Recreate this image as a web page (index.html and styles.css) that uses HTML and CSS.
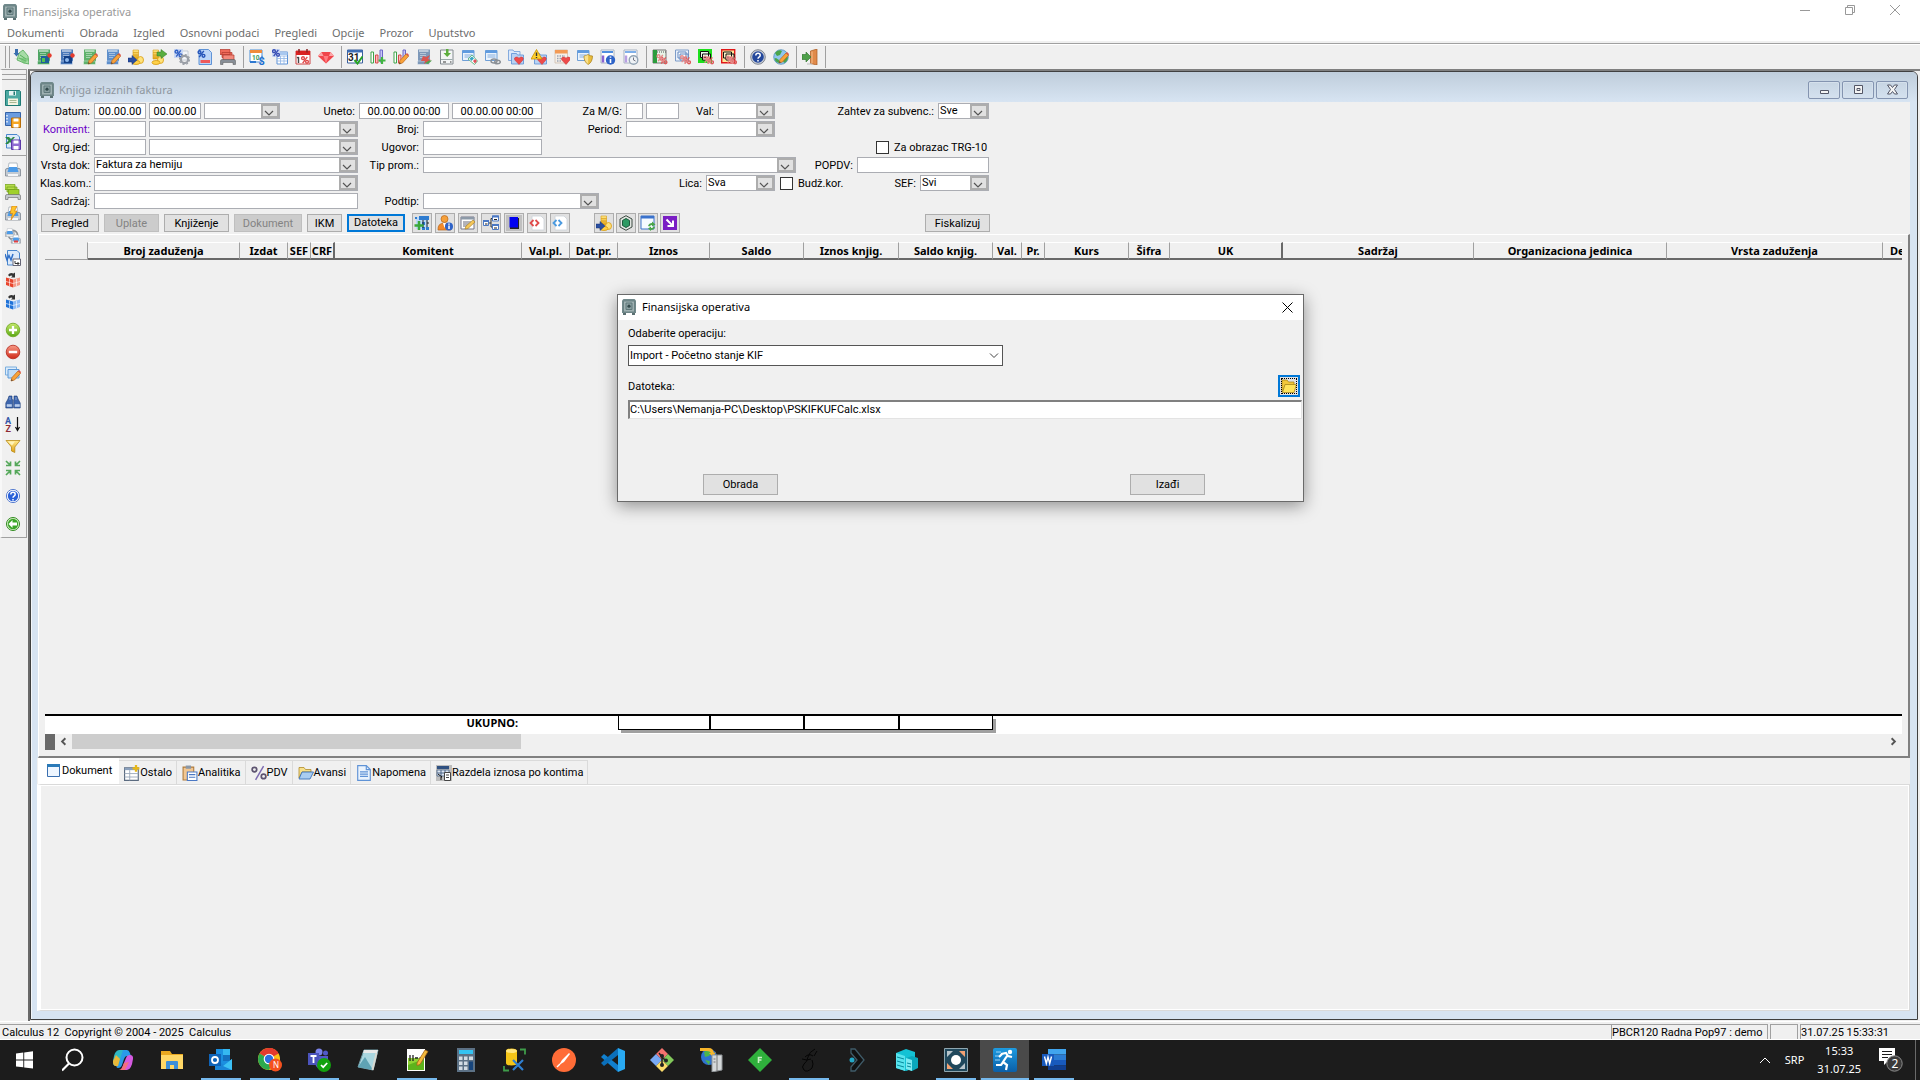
FILE: index.html
```html
<!DOCTYPE html>
<html lang="sr">
<head>
  <meta charset="UTF-8" />
  <meta name="viewport" content="width=device-width, initial-scale=1" />
  <title>Finansijska operativa</title>
  <link rel="stylesheet" href="styles.css">
</head>
<body>
  <!-- Icon sprite -->
  <svg class="sprite" xmlns="http://www.w3.org/2000/svg">
    <defs>
      <linearGradient id="g-green" x1="0" y1="0" x2="0" y2="1"><stop offset="0" stop-color="#c5e86c"/><stop offset="1" stop-color="#5aa814"/></linearGradient>
      <linearGradient id="g-red" x1="0" y1="0" x2="0" y2="1"><stop offset="0" stop-color="#f79a86"/><stop offset="1" stop-color="#cf2a1a"/></linearGradient>
      <linearGradient id="g-gold" x1="0" y1="0" x2="0" y2="1"><stop offset="0" stop-color="#ffe98a"/><stop offset="1" stop-color="#e0a010"/></linearGradient>
      <linearGradient id="g-sky" x1="0" y1="0" x2="0" y2="1"><stop offset="0" stop-color="#1d9be0"/><stop offset="1" stop-color="#0b5fa8"/></linearGradient>

      <!-- small parts -->
      <g id="pct" fill="none" stroke-width="1.4"><circle cx="2" cy="2.2" r="1.4"/><circle cx="6" cy="5.8" r="1.4"/><path d="M6.3.8 1.7 7.2"/></g>
      <g id="pencil"><path d="m6 15 1-3.5L13 5l2.500 2.300L9.500 14z" fill="#f9a23a" stroke="#b8661a" stroke-width=".7"/><path d="m13 5 1-1 2 2-.5 1.300z" fill="#e0524a"/><path d="m6 15 .6-2 1.400 1.400z" fill="#5b4a3a"/></g>
      <g id="coins"><path d="M5 1h5.500v9H5z" fill="url(#g-gold)" stroke="#d79b10" stroke-width=".6"/><path d="M5 3.500h5.500M5 6h5.500" stroke="#d79b10" stroke-width=".6"/><ellipse cx="12.500" cy="11" rx="3" ry="3.500" fill="#ffe27a" stroke="#d79b10" stroke-width=".8"/><ellipse cx="8" cy="13.500" rx="4" ry="2" fill="#ffd24a" stroke="#d79b10" stroke-width=".8"/></g>
      <g id="book"><path d="M2 .5h12v12H2z" fill="currentColor"/><path d="M3 2h9.500" stroke="#fff" stroke-width="1"/><path d="M1.500 12h12v3.500h-12z" fill="currentColor" stroke="#fff" stroke-width=".4"/><path d="M4 4.500h6M4 6.500h6M4 8.500h4" stroke="#fff" stroke-opacity=".55" stroke-width=".8"/></g>
      <g id="sheet"><path d="M.5 1.500h11.500v10H.5z" fill="#eaf3fd" stroke="#6f9fd6"/><path d="M.5 1.500h11.500v2.500H.5z" fill="#5f9be0"/><path d="M2.500 6h8M2.500 8h8" stroke="#86aede"/></g>
      <g id="printer"><path d="M4 1h8l1 6H3z" fill="#fff" stroke="#9aa3ad" stroke-width=".7"/><path d="M.5 8Q.5 6.500 2 6.500h12q1.500 0 1.500 1.500v6H.5z" fill="#c3cad2" stroke="#7d8791" stroke-width=".8"/><path d="M4 5h8l1.500 5h-11z" fill="#4c9be8"/><path d="M3 12h10v2H3z" fill="#f4f6f8"/></g>
      <g id="heart"><path d="M12 15.500 7.800 11q-1.200-2.300 1.200-3Q11 7.800 12 9.300 13 7.800 15 8q2 .800.900 3z" fill="#ee4b4b" stroke="#c93232" stroke-width=".5"/></g>

      <symbol id="i-safe" viewBox="0 0 14 16"><path d="M1.500 0h11L14 1.500V14H0V1.500z" fill="#71898b"/><path d="M1.500 2h11v11h-11z" fill="#9fb1b2" stroke="#6b8284"/><path d="M4 4h6v6.500H4z" fill="#8ba0a2" stroke="#5f787a"/><circle cx="7" cy="7.200" r="1.600" fill="#32494b"/><path d="M1 14h3v2H1zM10 14h3v2h-3z" fill="#5b7072"/></symbol>
      <symbol id="i-import" viewBox="0 0 16 16"><path d="M6 4 10 1l5 6 1 8-5-1-7-3z" fill="#a6dca6" stroke="#4fa854" stroke-width=".8"/><path d="m7 6 6 4M6 9l7 3" stroke="#55b05a"/><path d="M1 9h15v1l-5 5-4-5z" fill="#6cc070" opacity=".6"/><path d="M2 0h3v4h1.500l-3 3.500L.5 4H2z" fill="#3a6fae"/></symbol>
      <symbol id="i-book-g" viewBox="0 0 16 16"><use href="#book" color="#4ea564"/><path d="M5 7h8v7H5z" fill="#1d5f9a"/><path d="M6 9h3v4H6z" fill="#51c251"/><circle cx="13.500" cy="6.500" r="2.200" fill="#e53c2e"/></symbol>
      <symbol id="i-book-b" viewBox="0 0 16 16"><use href="#book" color="#4a78b8"/><path d="M5 7h8v7H5z" fill="#123f86"/><circle cx="8" cy="11" r="2" fill="#8fb9ec"/><circle cx="13.500" cy="6.500" r="2.200" fill="#e53c2e"/></symbol>
      <symbol id="i-edit-g" viewBox="0 0 16 16"><use href="#book" color="#5fb26c"/><use href="#pencil"/></symbol>
      <symbol id="i-edit-b" viewBox="0 0 16 16"><use href="#book" color="#5e8fcb"/><use href="#pencil"/></symbol>
      <symbol id="i-coins-in" viewBox="0 0 16 16"><use href="#coins"/><path d="M0 9h4V6.500L9 11l-5 4.500V13H0z" fill="#2a4fa0" stroke="#16327a" stroke-width=".5"/></symbol>
      <symbol id="i-coins-out" viewBox="0 0 16 16"><use href="#coins" x="-3"/><path d="M6 3h4V.5L16 5l-6 4.500V7H6z" fill="#58ad3f" stroke="#327a22" stroke-width=".5"/></symbol>
      <symbol id="i-pct-gear" viewBox="0 0 16 16"><path d="M6 2h8v9H6z" fill="#f4f6f9" stroke="#b3bcc8" stroke-width=".7"/><path d="M0 0h9v9H0z" fill="#c9d8f4"/><use href="#pct" x="0.500" y="0.500" stroke="#2f5fc4"/><circle cx="10.500" cy="10.500" r="3.600" fill="none" stroke="#9a9fa6" stroke-width="2.200"/><circle cx="10.500" cy="10.500" r="5" fill="none" stroke="#9a9fa6" stroke-width="1.200" stroke-dasharray="2 1.900"/></symbol>
      <symbol id="i-pct-doc" viewBox="0 0 16 16"><path d="M2 .5h9.500l3 3v12H2z" fill="#bcd6f8" stroke="#5f93d6"/><path d="M3.500 11h9.500v3H3.500z" fill="#ee5a5a"/><use href="#pct" x="0.500" y="1" stroke="#2352b8"/></symbol>
      <symbol id="i-print-red" viewBox="0 0 16 16"><path d="M0 .5h10v5H0zM2 3.500h10v5H2z" fill="#ef6a5a" stroke="#b23a2e" stroke-width=".7"/><path d="M3 6h11v5H3z" fill="#f2897c" stroke="#b23a2e" stroke-width=".7"/><path d="M.5 15.500v-3.500q0-1.500 1.500-1.500h12q1.500 0 1.500 1.500v3.500h-2.500v-2h-10v2z" fill="#888f97" stroke="#555" stroke-width=".5"/></symbol>
      <symbol id="i-cal-money" viewBox="0 0 16 16"><path d="M1 1h12v12H1z" fill="#fff" stroke="#4a90d8"/><path d="M1 1h12v3H1z" fill="#f08b3c"/><text x="3" y="10.500" font-size="6.500" font-weight="bold" fill="#3a9a5a">10</text><path d="M1 13h6" stroke="#2f78d0" stroke-width="2"/><text x="9.500" y="15.500" font-size="11" font-weight="bold" fill="#1f6fd0">$</text></symbol>
      <symbol id="i-pct-table" viewBox="0 0 16 16"><path d="M5 3h10.500v12H5z" fill="#fff" stroke="#5f93d6"/><path d="M5 7h10M5 9.500h10M5 12h10M8.500 7v8M12 7v8" stroke="#8fb5e6" stroke-width=".8"/><path d="M5 3h10.500v3H5z" fill="#a9c8ef"/><path d="M0 0h8v8H0z" fill="#c9d8f4"/><use href="#pct" x="0" y="0" stroke="#3a4fb4"/></symbol>
      <symbol id="i-cal-pct" viewBox="0 0 16 16"><path d="M1 2h14v13H1z" fill="#fff" stroke="#c44"/><path d="M1 2h14v4H1z" fill="#d92020"/><path d="M4 0v3.500M12 0v3.500" stroke="#822" stroke-width="1.500"/><path d="M3.500 8v6M2 9l1.500-1" stroke="#444" stroke-width="1.400"/><use href="#pct" x="6" y="7" stroke="#e04848"/></symbol>
      <symbol id="i-gem" viewBox="0 0 16 16"><path d="M3.500 3h9L16 7l-8 7.500L0 7z" fill="#f0454a"/><path d="M0 7 3.500 3l2 4zM12.500 3 16 7h-5z" fill="#fba6a8"/><path d="M5.500 7h5L8 14.500z" fill="#ff7b80"/></symbol>
      <symbol id="i-cal31" viewBox="0 0 16 16"><path d="M.5 1h15v13H.5z" fill="#fff" stroke="#3a5f9c"/><path d="M.5 1h15v2.500H.5z" fill="#3d6db4"/><text x="1" y="12" font-size="10" font-weight="bold" fill="#222">31</text><path d="m7.500 11 3 3.500 5-7" fill="none" stroke="#27a327" stroke-width="2"/></symbol>
      <symbol id="i-chart-add" viewBox="0 0 16 16"><path d="M1 3h2.500v11H1z" fill="#fff" stroke="#3fa349"/><path d="M5.500 6H8v8H5.500z" fill="#fbb" stroke="#d34a4a"/><path d="M10 1h2.500v12H10z" fill="#c8c6f5" stroke="#6b67c8"/><path d="M12 8v7M8.500 11.500h7" stroke="#41b541" stroke-width="2.200"/></symbol>
      <symbol id="i-chart-edit" viewBox="0 0 16 16"><path d="M1 3h2.500v11H1z" fill="#fff" stroke="#3fa349"/><path d="M5.500 6H8v8H5.500z" fill="#fbb" stroke="#d34a4a"/><path d="M10 1h2.500v8H10z" fill="#c8c6f5" stroke="#6b67c8"/><use href="#pencil"/></symbol>
      <symbol id="i-book-bolt" viewBox="0 0 16 16"><use href="#book" color="#7d98b8"/><path d="m7 7 3 1 4-2-2 4 3 1-7 4 1-3-4 0z" fill="#d95450"/><path d="m9 14 4-2.500h3L12 15z" fill="#4fa34f"/></symbol>
      <symbol id="i-disk-down" viewBox="0 0 16 16"><path d="M1.500 1h12.500v14H1.500z" fill="#f3f5f6" stroke="#838a90"/><path d="M2 10.500h11.500" stroke="#9aa"/><path d="M7 0h2.500v4H12L8.200 8 4.500 4H7z" fill="#5cad3e"/><path d="M4 13h3M11 13h1.500" stroke="#777" stroke-width="1.300"/></symbol>
      <symbol id="i-sheet-tag" viewBox="0 0 16 16"><use href="#sheet"/><path d="m6 10 4-4 5.500 6-3 3.500z" fill="#fff" stroke="#6b8"/><path d="m7.500 9.500 2.500-2 2 2-2.500 2.500z" fill="#3aa6c4"/><path d="m11 12 2-2 2 2-2 2.500z" fill="#e0505a"/></symbol>
      <symbol id="i-sheet-link" viewBox="0 0 16 16"><use href="#sheet"/><ellipse cx="9" cy="12" rx="3" ry="2" fill="none" stroke="#8b9096" stroke-width="1.500"/><ellipse cx="12.500" cy="13" rx="2.800" ry="1.800" fill="none" stroke="#8b9096" stroke-width="1.500"/></symbol>
      <symbol id="i-folders" viewBox="0 0 16 16"><path d="M.5 1H5l1 1.500h6v9H.5z" fill="#dce9fa" stroke="#6c9ad8" stroke-width=".8"/><path d="M3.500 4.500h5l1 1.500h6V15h-12z" fill="#b8d2f4" stroke="#5b8fd4" stroke-width=".8"/><use href="#heart" x="-1"/></symbol>
      <symbol id="i-folder-warn" viewBox="0 0 16 16"><path d="M3.500 4.500h5l1 1.500h6V15h-12z" fill="#b8d2f4" stroke="#5b8fd4" stroke-width=".8"/><use href="#heart" x="-1"/><path d="m5.500.5 5.500 9.500H0z" fill="#ffd02a" stroke="#c98f00" stroke-width=".8"/><path d="M5.500 3.500v3.500M5.500 8v1" stroke="#333" stroke-width="1.400"/></symbol>
      <symbol id="i-calc-heart" viewBox="0 0 16 16"><path d="M1 1h12.500v13H1z" fill="#f5efe9" stroke="#c8b8a8" stroke-width=".7"/><path d="M1 1h12.500v3.500H1z" fill="#f39a55"/><path d="M3 7h8M3 9.500h6M3 12h5" stroke="#9aa5b5" stroke-width="1.400" stroke-dasharray="1.500 1"/><use href="#heart"/></symbol>
      <symbol id="i-sheet-shield" viewBox="0 0 16 16"><use href="#sheet"/><path d="M7 7q2.500 0 4-1.500Q13 7 15.500 7q0 6-4.300 8.500Q7 13 7 7z" fill="#e9bd3e" stroke="#a87d14" stroke-width=".7"/><path d="M11.200 6v9Q7.500 12.500 7.500 7.300z" fill="#f8e08c"/></symbol>
      <symbol id="i-info" viewBox="0 0 16 16"><path d="M1 1h13v13H1z" fill="#fff" stroke="#a8b2c0"/><path d="M2 3h11" stroke="#4f8fe0" stroke-width="2"/><path d="M3 6.500v7" stroke="#8a63d2" stroke-width="2.500"/><circle cx="10.500" cy="11" r="4.700" fill="#2e63c8"/><path d="M10.500 10v4M10.500 7.500v1.300" stroke="#fff" stroke-width="1.600"/></symbol>
      <symbol id="i-clock" viewBox="0 0 16 16"><path d="M1 1h13v13H1z" fill="#fff" stroke="#a8b2c0"/><path d="M2 3h11" stroke="#7fb0ea" stroke-width="2"/><path d="M3 6.500v7" stroke="#b8a0e2" stroke-width="2.500"/><circle cx="10.500" cy="11" r="4.300" fill="#eef2f5" stroke="#93a4b4" stroke-width="1.400"/><path d="M10.500 8.500V11l2 1" fill="none" stroke="#667" stroke-width=".9"/></symbol>
      <symbol id="i-rep1" viewBox="0 0 16 16"><path d="M1 1h13v13H1z" fill="#e8f5e8" stroke="#777"/><path d="M1 1h4v13H1z" fill="#2c9c3c"/><path d="M5 3h9" stroke="#555" stroke-dasharray="1 1"/><use href="#pct" x="7.500" y="7.500" stroke="#dd5a5a"/><use href="#pct" x="4.500" y="5" stroke="#e58a8a"/></symbol>
      <symbol id="i-rep2" viewBox="0 0 16 16"><path d="M.5 1h13v11H.5z" fill="#e9f0fa" stroke="#7d9cc8"/><path d="M3 3h8v6H3zM5 5h8v6H5z" fill="#fff" stroke="#5f86c0"/><use href="#pct" x="8" y="7.500" stroke="#dd5a5a"/><use href="#pct" x="5" y="6" stroke="#e58a8a"/></symbol>
      <symbol id="i-rep3" viewBox="0 0 16 16"><path d="M0 0h14v14H0z" fill="#1ee01e"/><path d="M2.500 2.500h8v6h-8zM4.500 5h8v6h-8z" fill="#eafbea" stroke="#111"/><use href="#pct" x="8" y="7.500" stroke="#dd5a5a"/><use href="#pct" x="5" y="6.500" stroke="#e58a8a"/></symbol>
      <symbol id="i-rep4" viewBox="0 0 16 16"><path d="M.700.700h13v13h-13z" fill="#ffe79a" stroke="#e01818" stroke-width="1.400"/><path d="M2.500 3h8v6h-8zM5 5h8v6H5z" fill="#fff3c4" stroke="#111"/><use href="#pct" x="8" y="7.500" stroke="#dd5a5a"/><use href="#pct" x="5" y="6.500" stroke="#e58a8a"/></symbol>
      <symbol id="i-help" viewBox="0 0 16 16"><circle cx="8" cy="8" r="7.300" fill="#c9ced6" stroke="#68707c" stroke-width=".8"/><circle cx="8" cy="8" r="5.800" fill="#24489c"/><path d="M5.800 6.500Q5.800 4.300 8 4.300t2.200 2q0 1.200-1.200 1.900-1 .6-1 1.500M8 10.900v1.500" fill="none" stroke="#fff" stroke-width="1.500"/></symbol>
      <symbol id="i-globe-edit" viewBox="0 0 16 16"><circle cx="8" cy="8" r="7.300" fill="#8fc6ee" stroke="#4787b5" stroke-width=".7"/><path d="M2 4q3-4 7-2l-2 4-3 1zM9 10l5-3 1 2q-1 4-4 5zM3 9l3 2v3Q2 13 1.500 9.500z" fill="#4aa54a"/><use href="#pencil" y="-1"/></symbol>
      <symbol id="i-exit" viewBox="0 0 16 16"><path d="M8.500 2 15 0v16l-6.500-1.500z" fill="#e08a4a" stroke="#a85a20" stroke-width=".7"/><path d="M10 2.500v12" stroke="#f7bd8a"/><path d="M0 5.500h4V3l5 5-5 5v-2.500H0z" fill="#4fa04a" stroke="#2c6e2a" stroke-width=".6"/><path d="M5 15h5" stroke="#bbb"/></symbol>

      <symbol id="i-save" viewBox="0 0 16 16"><path d="M.5.500h14l1 1v14H.5z" fill="#4ca9a2" stroke="#1f7a74"/><path d="M4 1h7v4.500H4z" fill="#e8f4f3"/><path d="M8.500 1.500h1.500V5H8.500z" fill="#1f7a74"/><path d="M3 8.500h10V15H3z" fill="#f4f4e2"/><path d="M4.500 10.500h7M4.500 12.500h7" stroke="#a8b894"/></symbol>
      <symbol id="i-save-o" viewBox="0 0 16 16"><path d="M.5.500h15v13H.5z" fill="#6b9ce0" stroke="#3563a8"/><path d="M2 3v9" stroke="#fff" stroke-dasharray="1.500 1.500" stroke-width="1.300"/><path d="M6.500 6h9v9.500h-9z" fill="#f5a623" stroke="#b86e08"/><path d="M8.500 6.500h5v3h-5zM8.500 12h5v3.500h-5z" fill="#fff"/></symbol>
      <symbol id="i-save-x" viewBox="0 0 16 16"><path d="M1.500.500H12L14.500 3v11h-13z" fill="#dceafa" stroke="#4a86cc"/><path d="m0 3 4 0 2 2L8 3h2L7 6.500l3 3.500H7L5 8 3 10H0l3.500-3.500z" fill="#2d8a45"/><path d="M6.500 6h9v9.500h-9z" fill="#8f6cd2" stroke="#5d3aa8"/><path d="M8.500 6.500h5v3h-5zM8.500 12h5v3.500h-5z" fill="#fff"/></symbol>
      <symbol id="i-print" viewBox="0 0 16 16"><use href="#printer"/></symbol>
      <symbol id="i-print-g" viewBox="0 0 16 16"><path d="M0 .5h10v5H0zM2 3h10v5H2z" fill="#b4dc4a" stroke="#6f9c16" stroke-width=".7"/><path d="M3.500 5.500H14V11H3.500z" fill="#a0d02c" stroke="#6f9c16" stroke-width=".7"/><path d="M.5 15.500v-3.500q0-1.500 1.500-1.500h12q1.500 0 1.500 1.500v3.500h-2.500v-2h-10v2z" fill="#c4c9ce" stroke="#666" stroke-width=".6"/></symbol>
      <symbol id="i-print-bolt" viewBox="0 0 16 16"><use href="#printer"/><path d="m7 0 5 0-2.500 5H12l-6 9 1.500-6.500H5z" fill="#ffc42a" stroke="#d67f10" stroke-width=".7"/></symbol>
      <symbol id="i-print-chain" viewBox="0 0 16 16"><circle cx="8" cy="7" r="4.500" fill="none" stroke="#8b9096" stroke-width="1.800"/><g transform="scale(.6)"><use href="#printer"/></g><g transform="translate(6 6.500) scale(.62)"><use href="#printer"/></g><path d="M9 12.500h4v2H9z" fill="#e04040"/></symbol>
      <symbol id="i-word" viewBox="0 0 16 16"><path d="M2.500.500H12L14.500 3v12h-12z" fill="#dceafa" stroke="#4a86cc"/><path d="m0 4 2 6 2-4.500L6 10l2-6" fill="none" stroke="#2f6fc8" stroke-width="1.500"/><path d="M8 9h7.500v6.500H8z" fill="#fff" stroke="#667"/><path d="M10 11v2.500h4m-1.500-1.500 1.500 1.500-1.500 1.500" fill="none" stroke="#333"/></symbol>
      <symbol id="i-box-r" viewBox="0 0 16 16"><path d="M1 5.500 8 7.500v8L1 13z" fill="#e8442c"/><path d="M15 5.500 8 7.500v8l7-2.500z" fill="#f49a88"/><path d="M1 9.500l7 2 7-2M4.500 7v7M11.500 7v7" stroke="#fff" stroke-width=".6" fill="none"/><path d="M3 3q2-3 5.500-1.500L10 .500v5H6l1.500-1.500Q6 3 4.500 4.500z" fill="#333"/></symbol>
      <symbol id="i-box-b" viewBox="0 0 16 16"><path d="M1 5.500 8 7.500v8L1 13z" fill="#1f72d8"/><path d="M15 5.500 8 7.500v8l7-2.500z" fill="#8fbcf4"/><path d="M1 9.500l7 2 7-2M4.500 7v7M11.500 7v7" stroke="#fff" stroke-width=".6" fill="none"/><path d="M3 3q2-3 5.500-1.500L10 .500v5H6l1.500-1.500Q6 3 4.500 4.500z" fill="#333"/></symbol>
      <symbol id="i-add" viewBox="0 0 16 16"><circle cx="8" cy="8" r="6.800" fill="url(#g-green)" stroke="#6ba51c" stroke-width=".8"/><path d="M8 4v8M4 8h8" stroke="#fff" stroke-width="2.300"/></symbol>
      <symbol id="i-remove" viewBox="0 0 16 16"><circle cx="8" cy="8" r="6.800" fill="url(#g-red)" stroke="#b3261a" stroke-width=".8"/><path d="M3.800 8h8.400" stroke="#fff" stroke-width="2.500"/></symbol>
      <symbol id="i-modify" viewBox="0 0 16 16"><path d="M.5 1h11v8H.5z" fill="#dcecfb" stroke="#7aaede"/><path d="M3 3.500h11V12H3z" fill="#c3ddf7" stroke="#5d9ad8"/><use href="#pencil"/></symbol>
      <symbol id="i-find" viewBox="0 0 16 16"><path d="M4 2h3v3l.8 1V14H.8V9L3 5zM12 2H9v3l-.3 1V14h6.500V9L13 5z" fill="#3d66ae" stroke="#1d3d78" stroke-width=".6"/><path d="M2 10.500h4.500v2H2zM10 10.500h4.500v2H10zM5 3v3M11 3v3" fill="#b9cdec" stroke="#b9cdec" stroke-width=".6"/></symbol>
      <symbol id="i-sort" viewBox="0 0 16 16"><text x="0" y="7.500" font-size="9" font-weight="bold" fill="#3257a8">A</text><text x="0.500" y="15.500" font-size="9" font-weight="bold" fill="#8c2a35">Z</text><path d="M12.500 1v13M10.500 11l2 3.500 2-3.500" fill="none" stroke="#111" stroke-width="1.200"/></symbol>
      <symbol id="i-filter" viewBox="0 0 16 16"><path d="M1 2.500h14L9.800 9v5.500L6.500 13V9z" fill="url(#g-gold)" stroke="#b98a18" stroke-width=".8"/><path d="M3 3.500h7l-3 4z" fill="#fff3b8"/></symbol>
      <symbol id="i-collapse" viewBox="0 0 16 16"><path d="M1 1l4 4M5.500 1.500V5.500H1M15 1l-4 4M10.500 1.500V5.500h4.500M1 15l4-4M5.500 14.500v-4H1M15 15l-4-4M10.500 14.500v-4h4.500" fill="none" stroke="#55a85a" stroke-width="1.700"/></symbol>
      <symbol id="i-help2" viewBox="0 0 16 16"><circle cx="8" cy="8" r="6.600" fill="#fff" stroke="#5a7fd0" stroke-width="1"/><circle cx="8" cy="8" r="5.200" fill="#2a61d8"/><path d="M5.800 6.500Q5.800 4.300 8 4.300t2.200 2q0 1.200-1.200 1.900-1 .6-1 1.500M8 10.900v1.500" fill="none" stroke="#fff" stroke-width="1.500"/></symbol>
      <symbol id="i-back" viewBox="0 0 16 16"><circle cx="8" cy="8" r="6.500" fill="#dff3d2" stroke="#2e8a1c" stroke-width="1"/><circle cx="8" cy="8" r="5.200" fill="#3aa526"/><path d="m3.500 8 4-4v2.500H12v3H7.500V12z" fill="#fff"/></symbol>

      <symbol id="i-map-add" viewBox="0 0 16 16"><path d="M2 2h12v12H2z" fill="#b9d8f8"/><path d="M5 1h10v4H5zM8 7h3v3H8zM8 12h3v3H8zM12 12h3v3h-3z" fill="#2f7cd0"/><path d="M13 5v7M9 5v8M13 8h2" stroke="#222"/><path d="M5 6v9M.5 10.500h9" stroke="#3aa83a" stroke-width="2.500"/><path d="M1 2h2v2H1z" fill="#2f7cd0"/></symbol>
      <symbol id="i-user" viewBox="0 0 16 16"><circle cx="7.500" cy="4" r="3.500" fill="#f5a03a" stroke="#b8661a" stroke-width=".7"/><path d="M1 15q-.5-7 6.500-7t6.500 7z" fill="#f28a2a" stroke="#b8661a" stroke-width=".7"/><path d="M6 8h3l-1.500 5z" fill="#fff"/><circle cx="12" cy="11.500" r="4" fill="#2e63c8"/><path d="M12 10.500v3.500M12 8.500v1.200" stroke="#fff" stroke-width="1.500"/></symbol>
      <symbol id="i-note" viewBox="0 0 16 16"><path d="M1 2h13v12H1z" fill="#fff" stroke="#778"/><path d="M1 2h13v2.500H1z" fill="#8d9aa8"/><path d="M3 7h8M3 9h8M3 11h5" stroke="#556" stroke-width=".9"/><path d="m5 14 1-3 7-6 2 2-7 6.500z" fill="#f4c65a" stroke="#a57a1c" stroke-width=".6"/></symbol>
      <symbol id="i-tree" viewBox="0 0 16 16"><path d="M.5 5.500h5v5h-5zM9.500 1h6v5h-6zM9.500 9.500h6v5h-6z" fill="#fff" stroke="#4a78c4"/><path d="M0 5h6v2H0zM9 .5h7v2H9zM9 9h7v2H9z" fill="#4a78c4"/><path d="M2 9h2.500M11 4.500h3M11 13h3" stroke="#222"/><path d="M6 8h2V3.500h1M8 8v4h1" stroke="#333" fill="none"/></symbol>
      <symbol id="i-square" viewBox="0 0 16 16"><path d="M0 0h16v16H0z" fill="#c0c0c0"/><path d="M4 3h9v11H4z" fill="#222"/><path d="M3.500 2h8.500v10.500H3.500z" fill="#0000f0"/></symbol>
      <symbol id="i-code-r" viewBox="0 0 16 16"><path d="M3 1h9l3 3v11H3z" fill="#fff" stroke="#ccd2d8" stroke-width=".8"/><path d="M4.500 5 1.500 8l3 3M6.500 5l3 3-3 3" fill="none" stroke="#e04a4a" stroke-width="1.800"/></symbol>
      <symbol id="i-code-b" viewBox="0 0 16 16"><path d="M3 1h9l3 3v11H3z" fill="#fff" stroke="#ccd2d8" stroke-width=".8"/><path d="M4.500 5 1.500 8l3 3M6.500 5l3 3-3 3" fill="none" stroke="#4a9ae0" stroke-width="1.800"/></symbol>
      <symbol id="i-hex" viewBox="0 0 16 16"><path d="M8 .700 14 4v8l-6 3.300L2 12V4z" fill="#dfe4df" stroke="#3d4a42"/><path d="m8 3.500 3.500 2v5L8 12.500l-3.500-2v-5z" fill="#2c9a62" stroke="#1d5a3c"/></symbol>
      <symbol id="i-win-refresh" viewBox="0 0 16 16"><path d="M1 1h13v13H1z" fill="#f5faff" stroke="#3a72cc"/><path d="M1 1h13v2.500H1z" fill="#3a72cc"/><path d="M8 11q1-3 4-3l0-1.500 3.500 3-3.500 2V10q-2 0-2.500 1.500zM15 12q-1 3-4 3l0 1-3-2.500 3-2V13q2 0 2.500-1.500z" fill="#4aa54a"/></symbol>
      <symbol id="i-purple" viewBox="0 0 16 16"><path d="M1 1h14v14H1z" fill="#7a1fc4"/><path d="m4.500 4.500 6 6M11 5.500V11H5.500" fill="none" stroke="#fff" stroke-width="2"/></symbol>
      <symbol id="i-folder" viewBox="0 0 16 16"><path d="M1 2h5l1.500 2H13v3H4.500L1 14z" fill="#f2c73a" stroke="#a8871a" stroke-width=".8"/><path d="M4 6.500h11.500L13 14.500H1.500z" fill="#ffe35a" stroke="#a8871a" stroke-width=".8"/></symbol>

      <symbol id="i-tab-win" viewBox="0 0 13 13"><path d="M.5.500h12v12H.5z" fill="#eef6ff" stroke="#3a6fb0"/><path d="M0 0h13v3H0z" fill="#2a7ab8"/></symbol>
      <symbol id="i-tab-new" viewBox="0 0 14 14"><path d="M.5 2.500h12v11H.5z" fill="#fff" stroke="#5b6b80"/><path d="M.5 2.500h12v2H.5z" fill="#8aa0bc"/><path d="M.5 7.500h12M.5 10.500h12M5 4.500v9" stroke="#9aa8ba" stroke-width=".8"/><path d="M10.500 0v6M7.500 3h6" stroke="#e8b818" stroke-width="2"/></symbol>
      <symbol id="i-tab-clip" viewBox="0 0 14 15"><path d="M.5 2h10v12H.5z" fill="#f2c792" stroke="#b07a3a"/><path d="M3 .500h5v3H3z" fill="#8a98a8"/><path d="M4.500 6.500h9v8h-9z" fill="#fff" stroke="#4a78c4"/><path d="M6 9h6M6 11.500h6" stroke="#4a78c4"/></symbol>
      <symbol id="i-tab-pct" viewBox="0 0 14 14"><circle cx="3" cy="4" r="2" fill="none" stroke="#5d5470" stroke-width="1.500"/><circle cx="11" cy="10" r="2" fill="none" stroke="#5d5470" stroke-width="1.500"/><path d="m11 1-7 12" stroke="#7d6bb0" stroke-width="1.300"/></symbol>
      <symbol id="i-tab-folder" viewBox="0 0 16 14"><path d="M1 1.500h5l1.500 2H13V6H4L1 12z" fill="#f7e08a" stroke="#b08a2a" stroke-width=".8"/><path d="M4 6h11.500L12 13H1z" fill="#a9cdf2" stroke="#3a72b8" stroke-width=".9"/></symbol>
      <symbol id="i-tab-doc" viewBox="0 0 12 14"><path d="M.5.500H8L11.500 4v9.500H.5z" fill="#eaf3fd" stroke="#5f93d6"/><path d="M8 .500V4h3.500M2.500 6h7M2.500 8h7M2.500 10h7" fill="none" stroke="#5f93d6"/></symbol>
      <symbol id="i-tab-split" viewBox="0 0 16 16"><path d="M0 0h16v16H0z" fill="#bdbdbd"/><path d="M1 1h12v3H1z" fill="#2f5080"/><path d="M1 5h12v6H1z" fill="#dde6f2" stroke="#4c6486" stroke-width=".8"/><path d="M5 5v6M9 5v6M1 8h12" stroke="#4c6486"/><path d="M8.500 7.500h6v8h-6z" fill="#fff" stroke="#444"/><path d="M10 10h3M10 12.500h3" stroke="#444"/><path d="m2 9 4 3-1 0v3" stroke="#111" fill="none"/></symbol>
    </defs>
  </svg>

  <!-- Main title bar and menu -->
  <header class="titlebar">
    <svg class="app-icon"><use href="#i-safe"/></svg>
    <h1>Finansijska operativa</h1>
    <div class="win-controls">
      <button aria-label="Minimize"><svg viewBox="0 0 10 10"><path d="M0 5.500h10"/></svg></button>
      <button aria-label="Restore"><svg viewBox="0 0 10 10"><path d="M.5 2.500h7v7h-7zM2.500 2.500v-2h7v7h-2"/></svg></button>
      <button aria-label="Close"><svg viewBox="0 0 10 10"><path d="m0 0 10 10M10 0 0 10"/></svg></button>
    </div>
  </header>
  <nav class="menu">
    <button>Dokumenti</button>
    <button>Obrada</button>
    <button>Izgled</button>
    <button>Osnovni podaci</button>
    <button>Pregledi</button>
    <button>Opcije</button>
    <button>Prozor</button>
    <button>Uputstvo</button>
  </nav>

  <div class="toolbar">
    <span class="grip"></span>
    <button><svg><use href="#i-import"/></svg></button>
    <button><svg><use href="#i-book-g"/></svg></button>
    <button><svg><use href="#i-book-b"/></svg></button>
    <button><svg><use href="#i-edit-g"/></svg></button>
    <button><svg><use href="#i-edit-b"/></svg></button>
    <button><svg><use href="#i-coins-in"/></svg></button>
    <button><svg><use href="#i-coins-out"/></svg></button>
    <button><svg><use href="#i-pct-gear"/></svg></button>
    <button><svg><use href="#i-pct-doc"/></svg></button>
    <button><svg><use href="#i-print-red"/></svg></button>
    <span class="sep"></span>
    <button><svg><use href="#i-cal-money"/></svg></button>
    <button><svg><use href="#i-pct-table"/></svg></button>
    <button><svg><use href="#i-cal-pct"/></svg></button>
    <button><svg><use href="#i-gem"/></svg></button>
    <span class="sep"></span>
    <button><svg><use href="#i-cal31"/></svg></button>
    <button><svg><use href="#i-chart-add"/></svg></button>
    <button><svg><use href="#i-chart-edit"/></svg></button>
    <button><svg><use href="#i-book-bolt"/></svg></button>
    <button><svg><use href="#i-disk-down"/></svg></button>
    <button><svg><use href="#i-sheet-tag"/></svg></button>
    <button><svg><use href="#i-sheet-link"/></svg></button>
    <button><svg><use href="#i-folders"/></svg></button>
    <button><svg><use href="#i-folder-warn"/></svg></button>
    <button><svg><use href="#i-calc-heart"/></svg></button>
    <button><svg><use href="#i-sheet-shield"/></svg></button>
    <button><svg><use href="#i-info"/></svg></button>
    <button><svg><use href="#i-clock"/></svg></button>
    <span class="sep"></span>
    <button><svg><use href="#i-rep1"/></svg></button>
    <button><svg><use href="#i-rep2"/></svg></button>
    <button><svg><use href="#i-rep3"/></svg></button>
    <button><svg><use href="#i-rep4"/></svg></button>
    <span class="sep"></span>
    <button><svg><use href="#i-help"/></svg></button>
    <button><svg><use href="#i-globe-edit"/></svg></button>
    <span class="sep"></span>
    <button><svg><use href="#i-exit"/></svg></button>
    <span class="sep"></span>
  </div>

  <div class="workspace">
    <aside class="sidebar">
      <span class="grip"></span>
      <button><svg><use href="#i-save"/></svg></button>
      <button><svg><use href="#i-save-o"/></svg></button>
      <button><svg><use href="#i-save-x"/></svg></button>
      <span class="sep"></span>
      <button><svg><use href="#i-print"/></svg></button>
      <button><svg><use href="#i-print-g"/></svg></button>
      <button><svg><use href="#i-print-bolt"/></svg></button>
      <button><svg><use href="#i-print-chain"/></svg></button>
      <button><svg><use href="#i-word"/></svg></button>
      <button><svg><use href="#i-box-r"/></svg></button>
      <button><svg><use href="#i-box-b"/></svg></button>
      <span class="space"></span>
      <button><svg><use href="#i-add"/></svg></button>
      <button><svg><use href="#i-remove"/></svg></button>
      <button><svg><use href="#i-modify"/></svg></button>
      <span class="space"></span>
      <button><svg><use href="#i-find"/></svg></button>
      <button><svg><use href="#i-sort"/></svg></button>
      <button><svg><use href="#i-filter"/></svg></button>
      <button><svg><use href="#i-collapse"/></svg></button>
      <span class="space"></span>
      <button><svg><use href="#i-help2"/></svg></button>
      <span class="space"></span>
      <button><svg><use href="#i-back"/></svg></button>
    </aside>

    <div class="mdi">
      <section class="child">
        <div class="child-title">
          <svg class="app-icon"><use href="#i-safe"/></svg>
          <h2>Knjiga izlaznih faktura</h2>
          <div class="child-controls">
            <button aria-label="Minimize"><svg viewBox="0 0 11 11"><path d="M1.500 6.500h8v3h-8z"/></svg></button>
            <button aria-label="Maximize"><svg viewBox="0 0 11 11"><path d="M1.500 1.500h8v8h-8zM4 4.500h3v2H4z"/></svg></button>
            <button aria-label="Close"><svg viewBox="0 0 11 11"><path d="M.5 1h3l2 2.500 2-2.500h3L7.500 5.500l3 4.500h-3l-2-2.500-2 2.500h-3l3-4.500z"/></svg></button>
          </div>
        </div>

        <form class="filters">
          <div class="row">
            <label class="l-first" for="datum">Datum:</label>
            <input class="w-date gap" id="datum" type="text" value="00.00.00">
            <input class="w-date gap" type="text" value="00.00.00" aria-label="Datum do">
            <select class="w-range" aria-label="Raspon"><option></option></select>
            <label class="l-uneto" for="uneto">Uneto:</label>
            <input class="w-stamp gap" id="uneto" type="text" value="00.00.00 00:00">
            <input class="w-stamp" type="text" value="00.00.00 00:00" aria-label="Uneto do">
            <label class="l-mid" for="zamg">Za M/G:</label>
            <input class="w-month gap" id="zamg" type="text">
            <input class="w-year" type="text" aria-label="Godina">
            <label class="l-val" for="val">Val:</label>
            <select class="w-val" id="val"><option></option></select>
            <label class="l-zahtev" for="zahtev">Zahtev za subvenc.:</label>
            <select class="w-sve" id="zahtev"><option>Sve</option></select>
          </div>
          <div class="row">
            <label class="l-first link" for="komitent">Komitent:</label>
            <input class="w-date gap" id="komitent" type="text">
            <select class="w-name" aria-label="Naziv komitenta"><option></option></select>
            <label class="l-second" for="broj">Broj:</label>
            <input class="w-number" id="broj" type="text">
            <label class="l-mid" for="period">Period:</label>
            <select class="w-period" id="period"><option></option></select>
          </div>
          <div class="row">
            <label class="l-first" for="orgjed">Org.jed:</label>
            <input class="w-date gap" id="orgjed" type="text">
            <select class="w-name" aria-label="Naziv org. jedinice"><option></option></select>
            <label class="l-second" for="ugovor">Ugovor:</label>
            <input class="w-number" id="ugovor" type="text">
            <div class="check push-trg"><input id="trg" type="checkbox"><label for="trg">Za obrazac TRG-10</label></div>
          </div>
          <div class="row">
            <label class="l-first" for="vrsta">Vrsta dok:</label>
            <select class="w-wide" id="vrsta"><option>Faktura za hemiju</option></select>
            <label class="l-second" for="tip">Tip prom.:</label>
            <select class="w-tip" id="tip"><option></option></select>
            <label class="l-popdv" for="popdv">POPDV:</label>
            <input class="w-popdv" id="popdv" type="text">
          </div>
          <div class="row">
            <label class="l-first" for="klas">Klas.kom.:</label>
            <select class="w-wide" id="klas"><option></option></select>
            <label class="l-lica" for="lica">Lica:</label>
            <select class="w-short" id="lica"><option>Sva</option></select>
            <div class="check"><input id="budz" type="checkbox"><label for="budz">Budž.kor.</label></div>
            <label class="l-sef" for="sef">SEF:</label>
            <select class="w-short" id="sef"><option>Svi</option></select>
          </div>
          <div class="row">
            <label class="l-first" for="sadrzaj">Sadržaj:</label>
            <input class="w-wide" id="sadrzaj" type="text">
            <label class="l-second" for="podtip">Podtip:</label>
            <select class="w-podtip" id="podtip"><option></option></select>
          </div>

          <div class="actions">
            <div class="text-actions">
              <button type="button" class="b-m">Pregled</button>
              <button type="button" class="b-s" disabled>Uplate</button>
              <button type="button" class="b-l">Knjiženje</button>
              <button type="button" class="b-xl" disabled>Dokument</button>
              <button type="button" class="b-xs">IKM</button>
              <button type="button" class="b-m focused">Datoteka</button>
            </div>
            <div class="icon-actions">
              <button type="button"><svg><use href="#i-map-add"/></svg></button>
              <button type="button"><svg><use href="#i-user"/></svg></button>
              <button type="button"><svg><use href="#i-note"/></svg></button>
              <button type="button"><svg><use href="#i-tree"/></svg></button>
              <button type="button"><svg><use href="#i-square"/></svg></button>
              <button type="button"><svg><use href="#i-code-r"/></svg></button>
              <button type="button"><svg><use href="#i-code-b"/></svg></button>
            </div>
            <div class="icon-actions tight">
              <button type="button"><svg><use href="#i-coins-in"/></svg></button>
              <button type="button"><svg><use href="#i-hex"/></svg></button>
              <button type="button"><svg><use href="#i-win-refresh"/></svg></button>
              <button type="button"><svg><use href="#i-purple"/></svg></button>
            </div>
            <button type="button" class="b-l fiskal">Fiskalizuj</button>
          </div>
        </form>

        <div class="list-panel">
          <table class="list">
            <colgroup>
              <col class="c43"><col class="c152"><col class="c48"><col class="c23"><col class="c24"><col class="c187"><col class="c48"><col class="c48"><col class="c92"><col class="c94"><col class="c95"><col class="c94"><col class="c29"><col class="c23"><col class="c84"><col class="c41"><col class="c113"><col class="c191"><col class="c193"><col class="c216"><col>
            </colgroup>
            <thead>
              <tr>
                <th class="blank"></th>
                <th>Broj zaduženja</th><th>Izdat</th><th>SEF</th><th class="strong">CRF</th><th>Komitent</th>
                <th>Val.pl.</th><th>Dat.pr.</th><th>Iznos</th><th>Saldo</th><th>Iznos knjig.</th><th>Saldo knjig.</th>
                <th>Val.</th><th>Pr.</th><th>Kurs</th><th>Šifra</th><th class="strong">UK</th><th>Sadržaj</th>
                <th>Organizaciona jedinica</th><th>Vrsta zaduženja</th><th class="cut">De</th>
              </tr>
            </thead>
          </table>
          <div class="list-body"></div>
          <div class="totals">
            <strong>UKUPNO:</strong>
            <div class="total-boxes"><span class="c92"></span><span class="c94"></span><span class="c95"></span><span class="c93"></span></div>
          </div>
          <div class="scroll">
            <span class="split"></span>
            <svg viewBox="0 0 16 16"><path d="m10 4.500-3.500 3.500 3.500 3.500"/></svg>
            <span class="thumb"></span>
            <svg class="right" viewBox="0 0 16 16"><path d="m6 4.500 3.500 3.500-3.500 3.500"/></svg>
          </div>
        </div>

        <div class="tabs">
          <button class="active"><svg class="t13"><use href="#i-tab-win"/></svg>Dokument</button>
          <button><svg><use href="#i-tab-new"/></svg>Ostalo</button>
          <button><svg><use href="#i-tab-clip"/></svg>Analitika</button>
          <button><svg><use href="#i-tab-pct"/></svg>PDV</button>
          <button><svg><use href="#i-tab-folder"/></svg>Avansi</button>
          <button><svg><use href="#i-tab-doc"/></svg>Napomena</button>
          <button><svg><use href="#i-tab-split"/></svg>Razdela iznosa po kontima</button>
        </div>
        <div class="tab-page"></div>
      </section>
    </div>
  </div>

  <footer class="status">
    <span class="copy">Calculus 12&nbsp; Copyright © 2004 - 2025&nbsp; Calculus</span>
    <span class="cell db">PBCR120 Radna Pop97 : demo</span>
    <span class="cell empty"></span>
    <span class="cell time">31.07.25 15:33:31</span>
  </footer>

  <div class="taskbar">
    <button aria-label="Start"><svg viewBox="0 0 24 24"><path d="M3 5.500 10.300 4.600v6.900H3zM11.200 4.500 20 3.300v8.200h-8.800zM3 12.400h7.300v6.900L3 18.400zM11.200 12.400H20v8.200l-8.800-1.200z" fill="#fff"/></svg></button>
    <button aria-label="Search"><svg viewBox="0 0 24 24"><circle cx="12.500" cy="9.500" r="8" fill="none" stroke="#fff" stroke-width="2"/><path d="m7 15.500-7 7" stroke="#fff" stroke-width="2.200"/></svg></button>
    <button aria-label="Copilot"><svg viewBox="0 0 24 24"><path d="M8 2h8q2 0 2.700 2.500L20 8h-4q-2 0-3 3l-2 6q-1 3-4 3-2.500 0-1-5l2-9Q9 2 8 2z" fill="#2a9be8"/><path d="M2 13q1.500-11 6-11h4L8 15q-1 3-3 3-3.500 0-3-5z" fill="#2fb8c4"/><path d="M2 13l3-6 4 4-2 7Q1.500 19 2 13z" fill="#e8b83a"/><path d="M22 11q-1.500 11-6 11h-6l5-12q1-3 4-3 3.500 0 3 4z" fill="#d45ae0"/><path d="M18 14l-4 8h-6q3-1 4-4l1-3z" fill="#f4707a"/></svg></button>
    <button aria-label="Explorer"><svg viewBox="0 0 24 24"><path d="M1 3h9l2 3h11v15H1z" fill="#e9a820"/><path d="M1 7h22v14H1z" fill="#ffd766"/><path d="M6 21v-7q0-1 1-1h10q1 0 1 1v7h-4v-4h-4v4z" fill="#3d8fd8"/></svg></button>
    <button aria-label="Outlook" class="open"><svg viewBox="0 0 24 24"><path d="M7 1h14v16H7z" fill="#1b8fe0"/><path d="M14 1h7v6h-7z" fill="#35b8f1"/><path d="M14 7h7v6h-7z" fill="#1470c0"/><path d="M6 11l9 6 8-6v11H6z" fill="#1a86d8"/><path d="m23 11-9 7 9 4z" fill="#3cc0f4"/><path d="M0 6h12v12H0z" fill="#0f64b8"/><circle cx="6" cy="12" r="3" fill="none" stroke="#fff" stroke-width="1.800"/></svg></button>
    <button aria-label="Chrome" class="open"><svg viewBox="0 0 24 24"><circle cx="11" cy="11" r="11" fill="#fbc116"/><path d="M11 11 1.500 5.500a11 11 0 0 1 19 0z" fill="#e33b2e"/><path d="M11 0a11 11 0 0 1 9.500 5.500L11 6z" fill="#e33b2e"/><path d="M1.500 5.500A11 11 0 0 0 11 22l4.500-8.500z" fill="#2da94f"/><circle cx="11" cy="11" r="5.300" fill="#fff"/><circle cx="11" cy="11" r="4.200" fill="#2c6fe0"/><circle cx="17.500" cy="17" r="6.500" fill="#f4511e"/><text x="15" y="20" font-size="8" fill="#fff">N</text></svg></button>
    <button aria-label="Teams" class="open"><svg viewBox="0 0 24 24"><circle cx="12" cy="4" r="3.500" fill="#7b83eb"/><circle cx="18.500" cy="5" r="2.500" fill="#5059c9"/><path d="M8 8h13v7q0 6-6 6t-7-6z" fill="#5059c9"/><path d="M1 5h11v12H1z" fill="#4b53bc"/><path d="M3.500 8h6M6.500 8v7" stroke="#fff" stroke-width="1.800"/><circle cx="17" cy="17" r="7" fill="#13a10e"/><path d="m14 17 2.200 2.200 4-4.200" fill="none" stroke="#fff" stroke-width="1.700"/></svg></button>
    <button aria-label="Notepad"><svg viewBox="0 0 24 24"><path d="M8 2h14l-5 20-15-3z" fill="#a9d6df" stroke="#6f9aa5"/><path d="M8 2h14l-1 3H7z" fill="#e8e8e8"/><path d="M2 19l15 3-8-13z" fill="#5fa3b4"/><path d="m20.500 5-4 17" stroke="#d8d8d0" stroke-width="2"/></svg></button>
    <button aria-label="Notepad++" class="open"><svg viewBox="0 0 24 24"><path d="M2 1h18v22H2z" fill="#fff"/><path d="M3 10h16v12H3z" fill="#8fd334"/><path d="M3 17 19 11v11H3z" fill="#5db31c"/><path d="M5 7v6M8 7v6M10 10h3M14.500 10h3" stroke="#222" stroke-width="1.300"/><path d="m12 15 8-13 3 1.500-8 13-3 1z" fill="#f3b83a" stroke="#a3641a" stroke-width=".8"/></svg></button>
    <button aria-label="Calculator"><svg viewBox="0 0 24 24"><path d="M3 0h18v24H3z" fill="#5c7185"/><path d="M5 2h14v4H5z" fill="#35c3f2"/><path d="M5 8.500h3.500V12H5zM10 8.500h3.500V12H10zM15 8.500h4V12h-4zM5 13.500h3.500V17H5zM10 13.500h3.500V17H10zM5 18.500h3.500V22H5zM10 18.500h3.500V22H10z" fill="#d3dce4"/><path d="M15 13.500h4V22h-4z" fill="#17457c"/></svg></button>
    <button aria-label="Database tools"><svg viewBox="0 0 24 24"><path d="M3 3q0-2.500 5.500-2.500T14 3v12q0 2.500-5.500 2.500T3 15z" fill="#f5c518"/><ellipse cx="8.500" cy="3" rx="5.500" ry="2" fill="#ffe680"/><path d="M17 1.500h5v5M1 18v4.500h5" fill="none" stroke="#3f9c4a" stroke-width="1.800"/><path d="m10 12 10 10M20 12 10 22" stroke="#2f7fd0" stroke-width="2.200"/></svg></button>
    <button aria-label="Postman"><svg viewBox="0 0 24 24"><circle cx="12" cy="12" r="12" fill="#ff6c37"/><path d="m7 17 3-5 7-7 1 1-6 8z" fill="#fff"/><path d="m5 19 3-3" stroke="#fff" stroke-width="1.500"/></svg></button>
    <button aria-label="VS Code"><svg viewBox="0 0 24 24"><path d="m17 0 7 3v18l-7 3z" fill="#29a9f2"/><path d="m17 24-17-15 3-3 14 11z" fill="#1180cf"/><path d="M17 0 0 15l3 3L17 7z" fill="#0b6fba"/></svg></button>
    <button aria-label="Git"><svg viewBox="0 0 24 24"><path d="m12 0 6 6-6 6-6-6z" fill="#f4726e"/><path d="m6 6 6 6-6 6-6-6z" fill="#78a9f5"/><path d="m18 6 6 6-6 6-6-6z" fill="#82c85a"/><path d="m12 12 6 6-6 6-6-6z" fill="#fbdc6a"/><path d="M9 5l3 4v8M12 9l4 4" stroke="#222" stroke-width="1.500" fill="none"/><circle cx="12" cy="8" r="2" fill="#222"/><circle cx="12" cy="17" r="2" fill="#222"/><circle cx="16" cy="12.500" r="2" fill="#222"/></svg></button>
    <button aria-label="Server"><svg viewBox="0 0 24 24"><circle cx="10" cy="9" r="8" fill="#2f72d0"/><path d="M5 4q4-3 8 0l-3 4-4 1zM6 12l5 1-1 4z" fill="#4cb54c"/><path d="M1 0h9q4 0 5 5l2-1-3 5-4-4 2 0Q11 3 8 3H1z" fill="#f7b52a"/><path d="M13 7h10v15l-10 2z" fill="#d5d8da" stroke="#8d9295"/><path d="M18 7v16M14.500 11h2M14.500 14h2" stroke="#777"/></svg></button>
    <button aria-label="Firebird"><svg viewBox="0 0 24 24"><path d="m12 0 12 12-12 12L0 12z" fill="#2fb13c"/><path d="M10.500 15V9.500h3.500M10.500 12h3" fill="none" stroke="#c9f0c4" stroke-width="1.600"/></svg></button>
    <button aria-label="Editor" class="open"><svg viewBox="0 0 24 24"><path d="M18 1q-6 3-7 8t-4 7q-3 3 0 6t8-2q2-4 0-8M8 9q4-4 8-1M5 11q5 2 9 0M20 3l-3 5" fill="none" stroke="#050505" stroke-width="1"/></svg></button>
    <button aria-label="Terminal"><svg viewBox="0 0 24 24"><path d="M5 1h4l9 11-9 11H5v-4l6-7-6-7z" fill="#111" stroke="#3f5b68" stroke-width="1.300"/><circle cx="6" cy="12" r="2.500" fill="#22a8c8"/></svg></button>
    <button aria-label="Registry"><svg viewBox="0 0 24 24"><path d="m1 5 10-4 9 3v16l-9 3-10-3z" fill="#14c2d4"/><path d="m1 5 9 3v15l-9-3z" fill="#58e4ee"/><path d="m11 10 6-2 6 2v10l-6 3-6-2z" fill="#0aa8bc"/><path d="m11 10 6 2v11l-6-2z" fill="#7ceaf2"/><path d="m2 9 7 2m-7 2 7 2m-7 2 7 2m3-4 4 1m-4 2 4 1" stroke="#078a9c"/></svg></button>
    <button aria-label="Recorder" class="open"><svg viewBox="0 0 24 24"><path d="M.5.500h23v23H.5z" fill="#20485c" stroke="#8fa6b0"/><path d="M3 3h6L3 9zM21 21h-6l6-6z" fill="#b8c4ca"/><path d="M21 3v6l-6-6zM3 21v-6l6 6z" fill="#f2a274"/><circle cx="12" cy="12" r="5" fill="#fff"/></svg></button>
    <button aria-label="Calculus" class="open current"><svg viewBox="0 0 24 24"><rect width="24" height="24" rx="2" fill="url(#g-sky)"/><circle cx="17" cy="4" r="2.200" fill="#fff"/><path d="m8 6 5-1 2 3 4 1M14 8l-4 6 4 3-1 5M11 13l-3 4H3M9 6 6 9" fill="none" stroke="#fff" stroke-width="2.200"/><path d="M3 4h5M2 8h4M2 12h5" stroke="#9fd4f5"/></svg></button>
    <button aria-label="Word" class="open"><svg viewBox="0 0 24 24"><path d="M6 1h18v5.500H6z" fill="#41a5ee"/><path d="M6 6.500h18V12H6z" fill="#2b7cd3"/><path d="M6 12h18v5.500H6z" fill="#185abd"/><path d="M6 17.500h18V22H6z" fill="#103f91"/><path d="M0 6h12v12H0z" fill="#185abd"/><path d="m2.500 8.500 1.800 7L6 9l1.700 6.500 1.800-7" fill="none" stroke="#fff" stroke-width="1.400"/></svg></button>
    <div class="tray">
      <svg class="chev" viewBox="0 0 12 12"><path d="m1 9 5-5 5 5"/></svg>
      <span class="lang">SRP</span>
      <div class="clock"><span>15:33</span><span>31.07.25</span></div>
      <svg class="bell" viewBox="0 0 24 24"><path d="M0 0h16v13H9l-4 4v-4H0z" fill="#fff"/><path d="M3 3.500h10M3 6.500h10M3 9.500h6" stroke="#1c1c1c"/><circle cx="15.500" cy="15.500" r="7.700" fill="#3a3a3a" stroke="#8c8c8c"/><text x="12.500" y="20" font-size="12" fill="#fff">2</text></svg>
    </div>
  </div>

  <!-- Import dialog -->
  <div class="dialog" role="dialog" aria-labelledby="dlg-title">
    <div class="dialog-title">
      <svg class="app-icon"><use href="#i-safe"/></svg>
      <h2 id="dlg-title">Finansijska operativa</h2>
      <button aria-label="Close"><svg viewBox="0 0 11 11"><path d="m.5.500 10 10M10.500.500l-10 10"/></svg></button>
    </div>
    <div class="dialog-body">
      <label for="operacija">Odaberite operaciju:</label>
      <select id="operacija"><option>Import - Početno stanje KIF</option></select>
      <div class="file-row">
        <label for="fajl">Datoteka:</label>
        <button class="browse" aria-label="Izaberi"><svg><use href="#i-folder"/></svg></button>
      </div>
      <input id="fajl" type="text" value="C:\Users\Nemanja-PC\Desktop\PSKIFKUFCalc.xlsx">
      <div class="dialog-buttons">
        <button>Obrada</button>
        <button>Izađi</button>
      </div>
    </div>
  </div>
</body>
</html>
```
FILE: styles.css
```css
* {
  box-sizing: border-box;
}
body {
  margin: 0;
  height: 100vh;
  display: flex;
  flex-direction: column;
  overflow: hidden;
  position: relative;
  background: #f0f0f0;
  color: #000;
  font-family: Roboto, "Noto Sans", sans-serif;
  font-size: 11px;
  line-height: 14px;
}
button, input, select {
  font: inherit;
  color: inherit;
  margin: 0;
  padding: 0;
  border-radius: 0;
}
button {
  border: none;
  background: none;
  white-space: nowrap;
}
h1, h2 {
  margin: 0;
  font-size: 11px;
  font-weight: normal;
  line-height: 16px;
}
h1, h2, .menu, .list, .totals, .taskbar {
  font-family: "Noto Sans", sans-serif;
}
svg {
  display: block;
  flex: none;
}
.sprite {
  position: absolute;
  width: 0;
  height: 0;
}
.app-icon {
  width: 14px;
  height: 16px;
}

/* Title bar */
.titlebar {
  display: flex;
  align-items: center;
  height: 23px;
  padding: 0 3px;
  gap: 6px;
  background: #fff;
  color: #999;
}
.win-controls {
  display: flex;
  align-self: flex-start;
  margin-left: auto;
}
.win-controls button {
  width: 45px;
  height: 20px;
  display: flex;
  justify-content: center;
  align-items: center;
}
.win-controls svg {
  width: 10px;
  height: 10px;
  fill: none;
  stroke: #999;
}

.menu {
  display: flex;
  height: 20px;
  padding: 2px 0 0 7px;
  gap: 15px;
  align-items: center;
  background: #fff;
  border-bottom: 2px solid #f0f0f0;
  color: #6d6d6d;
}

/* Toolbars */
.toolbar {
  display: flex;
  align-items: center;
  height: 26px;
  border-top: 1px solid #a0a0a0;
  padding-left: 5px;
  box-shadow: inset 0 1px #fff;
}
.toolbar .grip {
  width: 5px;
  height: 22px;
  border: 1px solid #a0a0a0;
  border-width: 0 1px;
}
.toolbar button {
  width: 23px;
  padding-left: 3px;
}
.toolbar svg,
.sidebar svg {
  width: 16px;
  height: 16px;
}
.toolbar .sep {
  width: 6px;
  height: 22px;
  background: linear-gradient(#a0a0a0, #a0a0a0) 3px 0 / 1px 100% no-repeat;
}
.workspace {
  flex: 1;
  display: flex;
  align-items: flex-start;
  min-height: 0;
}
.sidebar {
  width: 27px;
  display: flex;
  flex-direction: column;
  border: 1px solid #a0a0a0;
  border-left: 2px solid #f8f8f8;
  padding: 4px 0 2px;
}
.sidebar .grip {
  height: 6px;
  margin-bottom: 7px;
  border: 1px solid #a0a0a0;
  border-width: 1px 0;
}
.sidebar button {
  height: 22px;
  padding-left: 3px;
}
.sidebar .sep {
  height: 6px;
  background: linear-gradient(#a0a0a0, #a0a0a0) 0 2px / 100% 1px no-repeat;
}
.sidebar .space {
  height: 6px;
}

/* Child window */
.mdi {
  flex: 1;
  min-width: 0;
  align-self: stretch;
  display: flex;
  margin-left: 1px;
  padding: 0 2px 1px 0;
  border-left: 2px solid #696969;
  border-top: 2px solid #808080;
}
.child {
  flex: 1;
  min-width: 0;
  display: flex;
  flex-direction: column;
  border: 1px solid #404040;
  border-radius: 6px 6px 0 0;
  padding: 0 7px 8px 6px;
  background: #d7e4f2;
  box-shadow: inset 1px 0 #f2f6fa;
}
.child-title {
  height: 30px;
  margin: 0 -7px 0 -6px;
  padding: 6px 2px 0 9px;
  display: flex;
  align-items: center;
  gap: 5px;
  border-radius: 5px 5px 0 0;
  background: linear-gradient(#bfcddb, #d7e4f2);
  color: #8e979f;
}
.child-controls {
  display: flex;
  gap: 2px;
  margin-left: auto;
  padding: 0 7px 1px 0;
}
.child-controls button {
  width: 32px;
  height: 18px;
  display: flex;
  justify-content: center;
  align-items: center;
  border: 1px solid #8494b0;
  border-radius: 2px;
  box-shadow: inset 0 0 0 1px #d5e0ec;
}
.child-controls svg {
  width: 11px;
  height: 11px;
  fill: #f4f4f4;
  stroke: #535666;
}

.filters {
  height: 132px;
  padding: 1px 3px 0;
  background: #f0f0f0;
}
.row {
  display: flex;
  align-items: center;
  height: 16px;
  margin-bottom: 2px;
}
.row label {
  padding-top: 1px;
}
.row > label {
  text-align: right;
  padding-right: 4px;
  white-space: nowrap;
  flex: none;
}
.row input[type="text"],
.row select {
  height: 16px;
  border: 1px solid #abadb3;
  background-color: #fff;
  flex: none;
  line-height: 14px;
}
.row input[type="text"] {
  padding: 1px 2px 0;
}
.row .w-date[value], .row .w-stamp {
  text-align: center;
}
.row select {
  appearance: none;
  padding: 0 18px 0 1px;
  background-image: url("data:image/svg+xml,%3Csvg xmlns='http://www.w3.org/2000/svg' width='18' height='14'%3E%3Cpath d='M1 1h16v12H1z' fill='%23e1e1e1' stroke='%23adadad' stroke-width='2'/%3E%3Cpath d='m4 7 4 4 4-4' fill='none' stroke='%23555' stroke-width='1.200'/%3E%3C/svg%3E");
  background-position: right 0;
  background-repeat: no-repeat;
}
.link { color: #6a00c8; }
.row .gap { margin-right: 3px; }
.l-first { width: 54px; }
.l-second { width: 65px; }
.l-mid { width: 84px; }
.l-uneto { width: 79px; }
.l-val { width: 39px; }
.l-zahtev { width: 163px; }
.l-popdv { width: 61px; }
.l-lica { width: 348px; }
.l-sef { width: 72px; }
.w-date { width: 52px; }
.w-range { width: 76px; }
.w-stamp { width: 90px; }
.w-month { width: 17px; }
.w-year { width: 33px; }
.w-val { width: 57px; }
.w-sve { width: 51px; }
.w-name { width: 209px; }
.w-number { width: 119px; }
.w-period { width: 149px; }
.w-wide { width: 264px; }
.w-tip { width: 373px; }
.w-popdv { width: 132px; }
.w-short { width: 69px; }
.w-podtip { width: 176px; }
.check {
  display: flex;
  align-items: center;
  gap: 5px;
  width: 68px;
  margin-left: 5px;
  white-space: nowrap;
}
.check input {
  appearance: none;
  width: 13px;
  height: 13px;
  border: 1px solid #333;
  background: #fff;
  flex: none;
}
.push-trg {
  margin-left: 334px;
}

.actions {
  display: flex;
  align-items: center;
  height: 20px;
  margin-top: 4px;
}
.text-actions {
  display: flex;
  gap: 5px;
  padding-left: 1px;
  margin-right: 7px;
}
.text-actions button,
.fiskal,
.icon-actions button,
.dialog-buttons button {
  border: 1px solid #adadad;
  background: #e1e1e1;
}
.text-actions button,
.fiskal {
  height: 18px;
  padding-top: 1px;
}
.text-actions button:disabled {
  background: #ccc;
  border-color: #bfbfbf;
  color: #838383;
}
.text-actions .focused {
  padding-top: 0;
  border: 2px solid #0078d7;
}
.b-xs { width: 35px; }
.b-s { width: 55px; }
.b-m { width: 58px; }
.b-l { width: 65px; }
.b-xl { width: 68px; }
.icon-actions {
  display: flex;
  gap: 3px;
}
.icon-actions.tight {
  gap: 2px;
  margin-left: 24px;
}
.icon-actions button {
  width: 20px;
  height: 20px;
  padding: 1px;
}
.icon-actions svg {
  width: 16px;
  height: 16px;
}
.fiskal {
  margin-left: 245px;
}

/* Document list */
.list-panel {
  flex: 1;
  min-height: 0;
  display: flex;
  flex-direction: column;
  margin-left: 1px;
  padding: 7px 6px 6px;
  background: #f0f0f0;
  border: 1px solid #fff;
  border-right: 2px solid #808080;
  border-bottom: 2px solid #808080;
}
.list {
  width: 100%;
  table-layout: fixed;
  border-collapse: separate;
  border-spacing: 0;
}
.list th {
  height: 18px;
  padding: 0;
  font-weight: bold;
  white-space: nowrap;
  overflow: hidden;
  border-top: 1px solid #fff;
  border-right: 1px solid #a0a0a0;
  border-bottom: 2px solid #696969;
}
.list .blank {
  border-top-color: transparent;
  border-bottom: 1px solid #a0a0a0;
}
.list .strong {
  border-right: 2px solid #696969;
}
.list .cut {
  text-align: left;
  padding-left: 7px;
  border-right: none;
}
.c23 { width: 23px; }
.c24 { width: 24px; }
.c29 { width: 29px; }
.c41 { width: 41px; }
.c43 { width: 43px; }
.c48 { width: 48px; }
.c84 { width: 84px; }
.c92 { width: 92px; }
.c93 { width: 93px; }
.c94 { width: 94px; }
.c95 { width: 95px; }
.c113 { width: 113px; }
.c152 { width: 152px; }
.c187 { width: 187px; }
.c191 { width: 191px; }
.c193 { width: 193px; }
.c216 { width: 216px; }
.list-body {
  flex: 1;
}
.totals {
  display: flex;
  height: 20px;
  border-top: 2px solid #000;
  background: #fff;
}
.totals strong {
  width: 573px;
  padding-right: 100px;
  text-align: right;
}
.total-boxes {
  display: flex;
  height: 14px;
  border-left: 1px solid #000;
  border-bottom: 1px solid #000;
  box-shadow: 3px 3px #a0a0a0;
}
.total-boxes span {
  border-right: 2px solid #000;
}
.total-boxes span:last-child {
  border-right-width: 1px;
}
.scroll {
  display: flex;
  align-items: flex-start;
  height: 16px;
}
.scroll .split {
  width: 10px;
  height: 16px;
  background: #696969;
}
.scroll svg {
  width: 17px;
  height: 15px;
  fill: none;
  stroke: #555;
  stroke-width: 2;
}
.scroll .right {
  margin-left: auto;
}
.scroll .thumb {
  width: 449px;
  height: 15px;
  background: #cdcdcd;
}

/* Bottom tabs */
.tabs {
  display: flex;
  height: 26px;
  padding-top: 2px;
  background: #f0f0f0;
}
.tabs button {
  display: flex;
  align-items: center;
  padding: 0 4px 0 5px;
  border-top: 1px solid #dadada;
  border-right: 1px solid #dadada;
}
.tabs svg {
  width: 16px;
  height: 16px;
}
.tabs .t13 {
  width: 13px;
  height: 13px;
  margin-right: 2px;
}
.tabs .active {
  margin-top: -2px;
  margin-left: 1px;
  padding: 0 7px 1px 9px;
  background: #fff;
  border: none;
}
.tab-page {
  height: 227px;
  border: 1px solid #dadada;
  border-left: 4px solid #fff;
  background: #f0f0f0;
  box-shadow: inset 0 1px #fff, inset -1px -1px #fff;
}

/* Status bar */
.status {
  display: flex;
  height: 19px;
  padding-top: 2px;
  border-top: 1px solid #fff;
  border-bottom: 1px solid #fff;
}
.status > span {
  border-top: 1px solid #a0a0a0;
  padding: 1px 0 0 2px;
  white-space: pre;
}
.status .copy {
  flex: 1;
}
.status .cell {
  border-left: 1px solid #a0a0a0;
  border-right: 1px solid #a0a0a0;
  padding-left: 0;
  margin-right: 2px;
}
.status .db { width: 157px; }
.status .empty { width: 28px; }
.status .time {
  width: 120px;
  margin-right: 0;
  border-right: none;
}

/* Windows taskbar */
.taskbar {
  display: flex;
  height: 40px;
  background: #1c1c1c;
  color: #fff;
}
.taskbar button {
  width: 49px;
  height: 40px;
  display: flex;
  justify-content: center;
  align-items: center;
}
.taskbar button svg {
  width: 24px;
  height: 24px;
}
.taskbar .open {
  background: linear-gradient(#76b9ed, #76b9ed) center bottom / 40px 2px no-repeat;
}
.taskbar .current {
  background: linear-gradient(#76b9ed, #76b9ed) center bottom / 48px 2px no-repeat, #4a4a4a;
}
.tray {
  display: flex;
  align-items: center;
  margin-left: auto;
  padding-right: 12px;
  margin-right: 4px;
  border-right: 1px solid #6a6a6a;
}
.tray .chev {
  width: 12px;
  height: 12px;
  margin-right: 14px;
  fill: none;
  stroke: #fff;
}
.tray .lang {
  margin-right: 13px;
}
.clock {
  display: flex;
  flex-direction: column;
  align-items: center;
  line-height: 18px;
  margin-right: 18px;
}
.bell {
  width: 24px;
  height: 24px;
}

/* Import dialog */
.dialog {
  position: absolute;
  top: 294px;
  left: 50%;
  width: 687px;
  height: 208px;
  margin-left: -343px;
  background: #f0f0f0;
  border: 1px solid #6a6a6a;
  box-shadow: 0 4px 16px rgba(0, 0, 0, 0.4);
}
.dialog-title {
  display: flex;
  align-items: center;
  height: 25px;
  padding: 0 10px 1px 4px;
  gap: 6px;
  background: #fff;
}
.dialog-title button {
  margin-left: auto;
}
.dialog-title button svg {
  width: 11px;
  height: 11px;
  fill: none;
  stroke: #000;
}
.dialog-body {
  padding: 7px 1px 0 10px;
  display: flex;
  flex-direction: column;
}
.dialog select {
  width: 375px;
  height: 21px;
  margin-top: 4px;
  padding: 0 0 0 1px;
  appearance: none;
  border: 1px solid #555;
  background: #fff url("data:image/svg+xml,%3Csvg xmlns='http://www.w3.org/2000/svg' width='17' height='19'%3E%3Cpath d='m5 7.500 4 4 4-4' fill='none' stroke='%23444'/%3E%3C/svg%3E") right 0 no-repeat;
}
.file-row {
  display: flex;
  justify-content: space-between;
  align-items: center;
  margin: 9px 2px 3px 0;
}
.file-row label {
  padding-top: 1px;
}
.browse {
  width: 22px;
  height: 22px;
  padding: 1px;
  border: 2px solid #0078d7;
  background: #e1e1e1;
}
.browse svg {
  width: 16px;
  height: 16px;
  outline: 1px dotted #000;
  outline-offset: -1px;
}
.dialog input {
  height: 19px;
  padding-bottom: 2px;
  border: 1px solid #e3e3e3;
  border-top: 2px solid #808080;
  border-left: 2px solid #808080;
  background: #fff;
}
.dialog-buttons {
  display: flex;
  justify-content: space-between;
  margin: 55px 97px 0 75px;
}
.dialog-buttons button {
  width: 75px;
  height: 21px;
  padding-top: 1px;
}
```
